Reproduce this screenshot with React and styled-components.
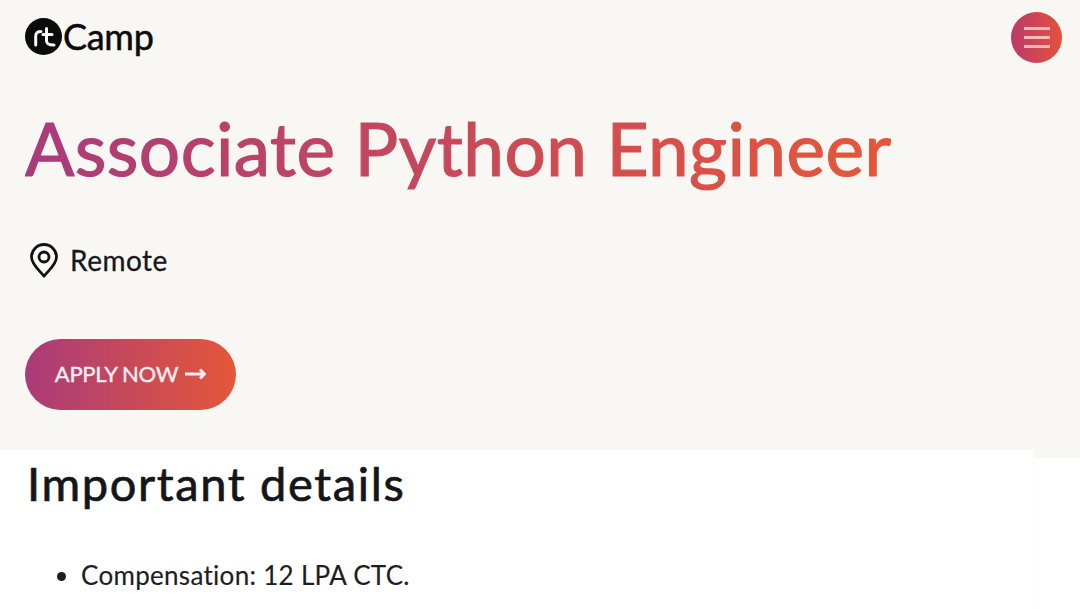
import React from 'react';
import styled, { createGlobalStyle } from 'styled-components';

const GlobalStyle = createGlobalStyle`
    html, body {
        margin: 0;
        padding: 0;
        background: #ffffff;
        font-family: 'Lato', 'Liberation Sans', sans-serif;
        color: #16181c;
        overflow: hidden;
    }
`;

const Page = styled.div`
    width: 1080px;
    height: 609px;
    overflow: hidden;
`;

const Hero = styled.header`
    height: 458px;
    box-sizing: border-box;
    padding: 12px 18px 0 25px;
    background: #f9f7f3;
`;

const TopBar = styled.div`
    display: flex;
    align-items: center;
    justify-content: space-between;
    height: 51px;
`;

const Logo = styled.div`
    display: flex;
    align-items: center;
    gap: 1px;
    margin-top: -3px;
`;

const LogoText = styled.span`
    font-size: 36px;
    font-weight: 400;
    letter-spacing: -0.3px;
    line-height: 36px;
    color: #0b0b0b;
    -webkit-text-stroke: 0.5px #0b0b0b;
`;

const MenuButton = styled.button`
    display: flex;
    flex-direction: column;
    align-items: center;
    justify-content: center;
    gap: 6px;
    width: 51px;
    height: 51px;
    padding: 0;
    border: 0;
    border-radius: 50%;
    background: linear-gradient(90deg, #bd3a6c 0%, #e2523b 100%);

    span {
        display: block;
        width: 26px;
        height: 3px;
        background: #f7bcb8;
    }
`;

const Title = styled.h1`
    margin: 35px 0 0;
    font-size: 73px;
    font-weight: 400;
    letter-spacing: 0.4px;
    line-height: 100px;
    width: fit-content;
    background: linear-gradient(90deg, #a93b79 0%, #e5573a 100%);
    -webkit-background-clip: text;
    background-clip: text;
    color: transparent;
    -webkit-text-stroke: 1.2px transparent;
`;

const Location = styled.div`
    display: flex;
    align-items: center;
    gap: 12px;
    margin: 42px 0 0 5px;
    font-size: 28px;
    letter-spacing: 0.5px;
    line-height: 40px;
    color: #16181c;
    -webkit-text-stroke: 0.3px #16181c;
`;

const ApplyButton = styled.a`
    display: flex;
    align-items: center;
    justify-content: center;
    gap: 7px;
    width: 211px;
    height: 71px;
    margin-top: 59px;
    padding-bottom: 2px;
    box-sizing: border-box;
    border-radius: 36px;
    background: linear-gradient(90deg, #a93b79 0%, #e5573a 100%);
    color: #fdeef0;
    font-size: 22px;
    font-weight: 400;
    letter-spacing: -0.3px;
    -webkit-text-stroke: 0.4px #fdeef0;
`;

const Content = styled.main`
    position: relative;
    width: 1034px;
    height: 160px;
    box-sizing: border-box;
    margin-top: -8px;
    padding: 0 0 0 27px;
    background: #ffffff;
    border-right: 1px solid #fbfbf9;
`;

const SectionTitle = styled.h2`
    margin: 0;
    font-size: 47px;
    font-weight: 400;
    letter-spacing: 1.65px;
    line-height: 66px;
    color: #14161a;
    -webkit-text-stroke: 0.7px #14161a;
`;

const DetailList = styled.ul`
    margin: 40px 0 0;
    padding: 0 0 0 54px;
    font-size: 26px;
    letter-spacing: 0.3px;
    line-height: 38px;
    color: #1c1e22;
    -webkit-text-stroke: 0.15px #1c1e22;
`;

const LogoMark = () => (
    <svg width="37" height="37" viewBox="0 0 37 37" role="img" aria-label="rt">
        <circle cx="18.5" cy="18.5" r="18.5" fill="#0b0b0b" />
        <g fill="none" stroke="#f9f7f3" strokeWidth="3" strokeLinecap="round">
            <path d="M10.7 27 V18 C10.7 14.8 12.5 13.5 16 13.5" />
            <path d="M21.5 10.5 V22.5 C21.5 25.8 23.5 27 29 27" />
            <path d="M18 16.5 H27" />
        </g>
    </svg>
);

const PinIcon = () => (
    <svg width="28" height="35" viewBox="0 0 28 35" fill="none" stroke="#111317" strokeWidth="2.8">
        <path d="M14 33.2 C 10 28 1.5 21.5 1.5 14 A12.5 12.5 0 0 1 26.5 14 C 26.5 21.5 18 28 14 33.2 Z" strokeLinejoin="round" />
        <circle cx="14" cy="14" r="5" />
    </svg>
);

const ArrowIcon = () => (
    <svg width="21" height="14" viewBox="0 0 21 14" fill="none" stroke="#fdeef0" strokeWidth="3">
        <path d="M0 7 H19" />
        <path d="M15 2.5 L19.5 7 L15 11.5" />
    </svg>
);

const App = () => {
    return (
        <Page>
            <GlobalStyle />
            <Hero>
                <TopBar>
                    <Logo>
                        <LogoMark />
                        <LogoText>Camp</LogoText>
                    </Logo>
                    <MenuButton aria-label="Menu">
                        <span />
                        <span />
                        <span />
                    </MenuButton>
                </TopBar>
                <Title>Associate Python Engineer</Title>
                <Location>
                    <PinIcon />
                    Remote
                </Location>
                <ApplyButton>
                    APPLY NOW
                    <ArrowIcon />
                </ApplyButton>
            </Hero>
            <Content>
                <SectionTitle>Important details</SectionTitle>
                <DetailList>
                    <li>Compensation: 12 LPA CTC.</li>
                </DetailList>
            </Content>
        </Page>
    );
};

export default App;
